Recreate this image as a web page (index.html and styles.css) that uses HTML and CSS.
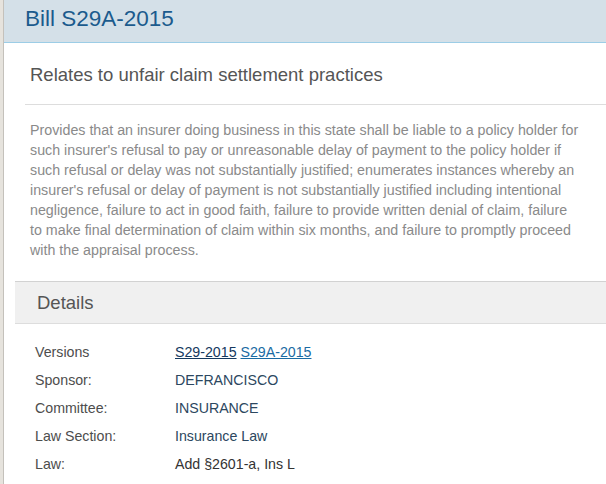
FILE: index.html
```html
<!DOCTYPE html>
<html lang="en">
<head>
<meta charset="utf-8">
<title>Bill S29A-2015</title>
<link rel="stylesheet" href="styles.css">
</head>
<body>
<div class="page">
  <header class="bill-header">
    <h1 class="bill-title">Bill S29A-2015</h1>
  </header>
  <section class="summary">
    <h2 class="summary-title">Relates to unfair claim settlement practices</h2>
  </section>
  <p class="summary-text">Provides that an insurer doing business in this state shall be liable to a policy holder for such insurer's refusal to pay or unreasonable delay of payment to the policy holder if such refusal or delay was not substantially justified; enumerates instances whereby an insurer's refusal or delay of payment is not substantially justified including intentional negligence, failure to act in good faith, failure to provide written denial of claim, failure to make final determination of claim within six months, and failure to promptly proceed with the appraisal process.</p>
  <section class="details">
    <div class="details-head">Details</div>
    <dl class="details-list">
      <dt>Versions</dt>
      <dd><a class="ver ver-old" href="#">S29-2015</a> <a class="ver" href="#">S29A-2015</a></dd>
      <dt>Sponsor:</dt>
      <dd class="val-blue">DEFRANCISCO</dd>
      <dt>Committee:</dt>
      <dd class="val-blue">INSURANCE</dd>
      <dt>Law Section:</dt>
      <dd class="val-blue">Insurance Law</dd>
      <dt>Law:</dt>
      <dd>Add §2601-a, Ins L</dd>
    </dl>
  </section>
</div>
</body>
</html>
```

FILE: styles.css
```css
html, body {
  margin: 0;
  padding: 0;
}
body {
  background: #e6e3dd;
  font-family: "Liberation Sans", Arial, sans-serif;
  overflow: hidden;
}
.page {
  margin-left: 3px;
  border-left: 1px solid #c4c1bb;
  background: #ffffff;
  min-height: 100vh;
}
.bill-header {
  height: 42px;
  background: #d4e0e8;
  border-bottom: 1px solid #9ccde6;
  display: flex;
  align-items: center;
  padding-left: 21px;
}
.bill-title {
  margin: 0;
  font-weight: normal;
  font-size: 22.5px;
  line-height: 26px;
  color: #1b5b8d;
  position: relative;
  top: -2px;
}
.summary {
  margin-left: 21px;
  padding: 20px 0 17px 5px;
  border-bottom: 1px solid #dddddd;
}
.summary-title {
  margin: 0;
  font-weight: normal;
  font-size: 18.5px;
  line-height: 24px;
  color: #555555;
}
.summary-text {
  margin: 15px 25px 0 26px;
  font-size: 14.25px;
  line-height: 20px;
  color: #8a8a8a;
}
.details {
  margin: 21px 0 0 11px;
}
.details-head {
  height: 41px;
  border-top: 1px solid #d2d2d2;
  border-bottom: 1px solid #dddddd;
  background: #f0f0f0;
  display: flex;
  align-items: center;
  padding-left: 22px;
  font-size: 18.5px;
  color: #555555;
}
.details-list {
  margin: 14px 0 0 20px;
  display: grid;
  grid-template-columns: 140px 1fr;
  grid-auto-rows: 28px;
  align-items: center;
  font-size: 14.2px;
}
.details-list dt {
  color: #4d4d4d;
}
.details-list dd {
  margin: 0;
  color: #333333;
}
.details-list .val-blue {
  color: #2c4760;
}
.ver {
  color: #1a6ba3;
  text-decoration: underline;
}
.ver-old {
  color: #15395e;
}
```
